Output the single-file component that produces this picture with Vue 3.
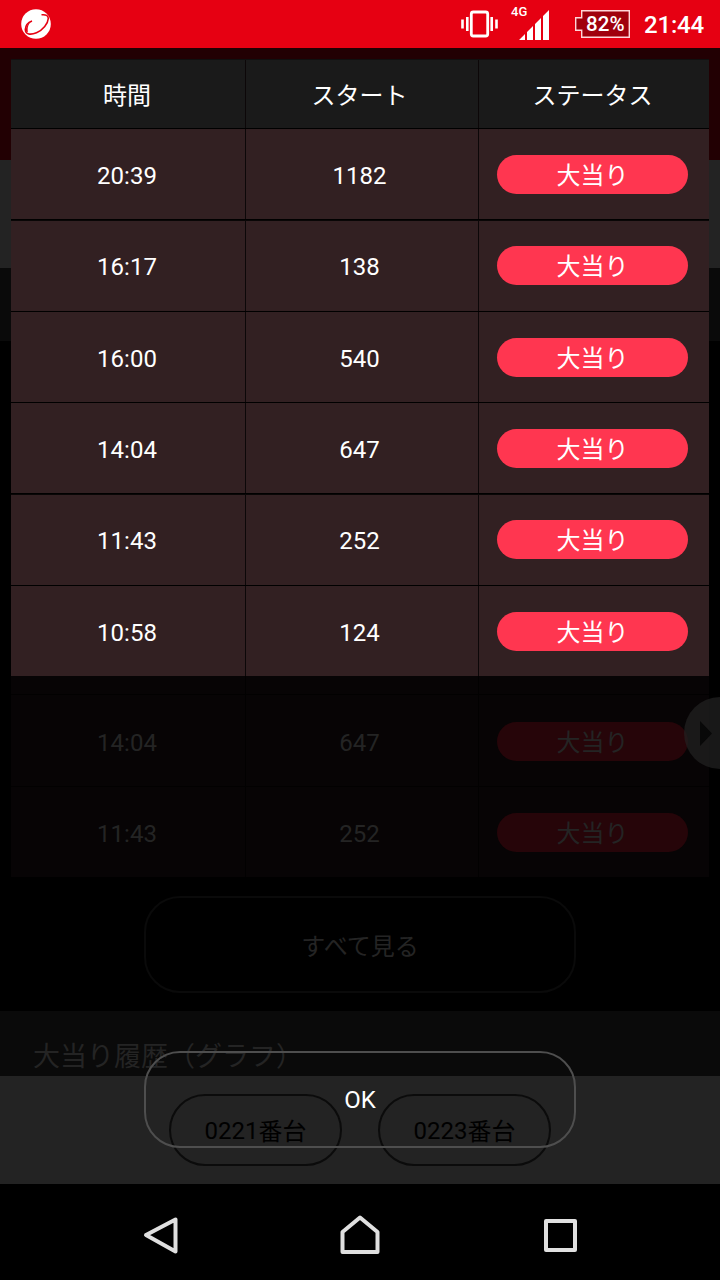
<script setup>
const rows = [
  { time: '20:39', start: '1182' },
  { time: '16:17', start: '138', thick: true },
  { time: '16:00', start: '540' },
  { time: '14:04', start: '647' },
  { time: '11:43', start: '252', thick: true },
  { time: '10:58', start: '124' },
]
const pageRows = rows.slice(3, 5)
</script>

<template>
  <div class="phone">
    <header class="status">
      <svg class="logo" width="32" height="32" viewBox="0 0 32 32">
        <circle cx="16" cy="16" r="14.8" fill="#fff" />
        <path d="M12 13C8 14.500 5.500 18 5.300 21.500 5.500 26.500 10.500 27.200 16.500 24.700 23 22 28 15.500 28.300 10.500 28.300 7.500 26 6.300 21.500 6.800" fill="none" stroke="#e60012" stroke-width="1.600" />
        <path d="M12 12.600C8.500 15.500 7 20 8 24L6 23.500C5.500 20 7 16 12 12.600Z" fill="#e60012" />
      </svg>
      <div class="indicators">
        <svg class="vibrate" width="37" height="28" viewBox="0 0 37 28">
          <rect x="10.300" y="2" width="16.400" height="24" rx="2" fill="none" stroke="#fff" stroke-width="2.800" />
          <path d="M1.500 9.500v9M6.300 7v14M30.700 7v14M35.500 9.500v9" stroke="#fff" stroke-width="2.600" />
        </svg>
        <div class="signal">
          <span>4G</span>
          <svg width="30" height="30" viewBox="0 0 30 30">
            <path d="M0 30 6 24V30ZM8 22 14 16V30H8ZM16 14 22 8V30H16ZM24 6 30 0V30H24Z" fill="#fff" />
          </svg>
        </div>
        <div class="battery">
          <svg width="56" height="29" viewBox="0 0 56 29">
            <path d="M6.700.7H54.300V27.300H6.700V20.300H.7V7.700H6.700Z" fill="#a0000d" stroke="#ffd5d8" stroke-width="1.400" />
          </svg>
          <span>82%</span>
        </div>
        <span class="clock">21:44</span>
      </div>
    </header>

    <main class="page">
      <div class="band red"></div>
      <div class="band gray"></div>
      <div class="band title"></div>
      <div class="history">
        <div class="table faded">
          <div class="row stub"><div></div><div></div><div></div></div>
          <div v-for="r in pageRows" :key="r.time" class="row">
            <div>{{ r.time }}</div>
            <div>{{ r.start }}</div>
            <div><span class="pill">大当り</span></div>
          </div>
        </div>
        <button class="more">すべて見る</button>
      </div>
      <h2 class="heading">大当り履歴（グラフ）</h2>
      <div class="chips">
        <span class="chip">0221<span class="unit">番台</span></span>
        <span class="chip">0223<span class="unit">番台</span></span>
      </div>
    </main>

    <nav class="nav">
      <svg width="36" height="40" viewBox="0 0 36 40"><path d="M32.500 3.500V35.500L3 19Z" /></svg>
      <svg width="40" height="40" viewBox="0 0 40 40"><path d="M2.500 37V17L20 2.500 37.500 17V37Z" /></svg>
      <svg width="34" height="34" viewBox="0 0 34 34"><rect x="2" y="2" width="29" height="29" /></svg>
    </nav>

    <section class="modal">
      <div class="table">
        <div class="row head"><div>時間</div><div>スタート</div><div>ステータス</div></div>
        <div v-for="r in rows" :key="r.time" class="row" :class="{ thick: r.thick }">
          <div>{{ r.time }}</div>
          <div>{{ r.start }}</div>
          <div><span class="pill">大当り</span></div>
        </div>
      </div>
      <button class="ok">OK</button>
    </section>

    <div class="side-tab">
      <svg width="12" height="25" viewBox="0 0 12 25"><path d="M0 0 12 12.500 0 25Z" fill="#080808" /></svg>
    </div>
  </div>
</template>

<style>
body { margin: 0; background: #000; }
</style>

<style scoped>
* { box-sizing: border-box; }
.phone {
  position: relative;
  display: flex;
  flex-direction: column;
  width: 720px;
  height: 1280px;
  overflow: hidden;
  background: #000;
  color: #fff;
  font-family: Roboto, "Noto Sans CJK JP", sans-serif;
  font-size: 24px;
  line-height: 30px;
}
.status {
  display: flex;
  justify-content: space-between;
  height: 48px;
  padding: 8px 16px 0 20px;
  background: #e60012;
}
.indicators { display: flex; align-items: flex-start; }
.vibrate { margin-top: 2px; }
.signal { display: flex; margin-left: 13px; margin-top: 2px; }
.signal span { width: 8px; margin-top: -5px; font-size: 13px; font-weight: 500; line-height: 13px; white-space: nowrap; }
.battery {
  display: grid;
  width: 56px;
  height: 29px;
  margin: 2px 0 0 26px;
}
.battery > * { grid-area: 1 / 1; }
.battery span { padding-left: 11px; font-size: 20.500px; font-weight: 500; line-height: 28px; }
.clock { margin-left: 13px; font-size: 24px; font-weight: 500; line-height: 34px; letter-spacing: -0.2px; }

.page { display: flex; flex-direction: column; height: 1136px; }
.band.red { height: 112px; background: #220003; }
.band.gray { height: 108px; background: #232323; }
.band.title { height: 73px; background: #0a0a0a; }
.history {
  display: flex;
  flex-direction: column;
  align-items: center;
  justify-content: flex-end;
  height: 670px;
  padding-bottom: 18px;
}
.table { width: 698px; }
.row {
  display: grid;
  grid-template-columns: 234px 234px 230px;
  height: 91.333px;
  background: #322022;
  border-top: 1px solid #000;
}
.row.thick { box-shadow: inset 0 1px #090606; }
.row > div {
  display: flex;
  align-items: center;
  justify-content: center;
  padding: 4px 2px 0 0;
}
.row > div:nth-child(2) {
  padding-right: 5px;
  border: solid #0c0708;
  border-width: 0 1px;
}
.row > div:last-child { padding: 0 3px 0 0; }
.row.head { height: 69px; border-top-color: #101010; background: #1a1a1a; }
.row.head > div { padding-top: 4px; }
.pill {
  width: 191px;
  height: 39px;
  margin-top: 1px;
  padding-top: 2px;
  border-radius: 20px;
  background: #ff3650;
  line-height: 39px;
  text-align: center;
}
.faded { color: #242424; }
.faded .row { background: #070405; border-color: #020101; }
.faded .row > div { border-color: #020101; }
.faded .stub { height: 19px; border-top: 0; }
.faded .pill { background: #260509; }
button {
  width: 432px;
  height: 97px;
  padding: 0;
  border: 2px solid #4e4e4e;
  border-radius: 36px;
  background: none;
  color: inherit;
  font: inherit;
}
.more { margin-top: 19px; padding-top: 4px; border-color: #0a0a0a; color: #242424; }
.heading {
  height: 65px;
  margin: 0;
  padding: 27px 33px 0;
  background: #0a0a0a;
  color: #242424;
  font-size: 27px;
  font-weight: 400;
  line-height: 38px;
}
.chips { display: flex; justify-content: center; gap: 36px; height: 108px; padding-top: 18px; background: #232323; }
.chip {
  width: 173px;
  height: 72px;
  border: 2px solid #0b0b0b;
  border-radius: 36px;
  color: #000;
  line-height: 70px;
  text-align: center;
}
.unit { position: relative; top: 1px; }
.nav { display: flex; align-items: flex-start; height: 96px; padding-left: 143px; }
.nav svg { margin-top: 32px; fill: none; stroke: #e0e0e0; stroke-width: 4; stroke-linejoin: round; }
.nav svg:nth-child(2) { margin-left: 161px; margin-top: 31px; }
.nav svg:nth-child(3) { margin-left: 164px; margin-top: 35px; }
.modal {
  position: absolute;
  inset: 59px 0 132px;
  display: flex;
  flex-direction: column;
  align-items: center;
  justify-content: space-between;
}
.side-tab {
  position: absolute;
  top: 697px;
  left: 684px;
  display: flex;
  align-items: center;
  width: 72px;
  height: 72px;
  padding-left: 16px;
  border-radius: 50%;
  background: rgba(34, 34, 34, 0.7);
}
</style>
